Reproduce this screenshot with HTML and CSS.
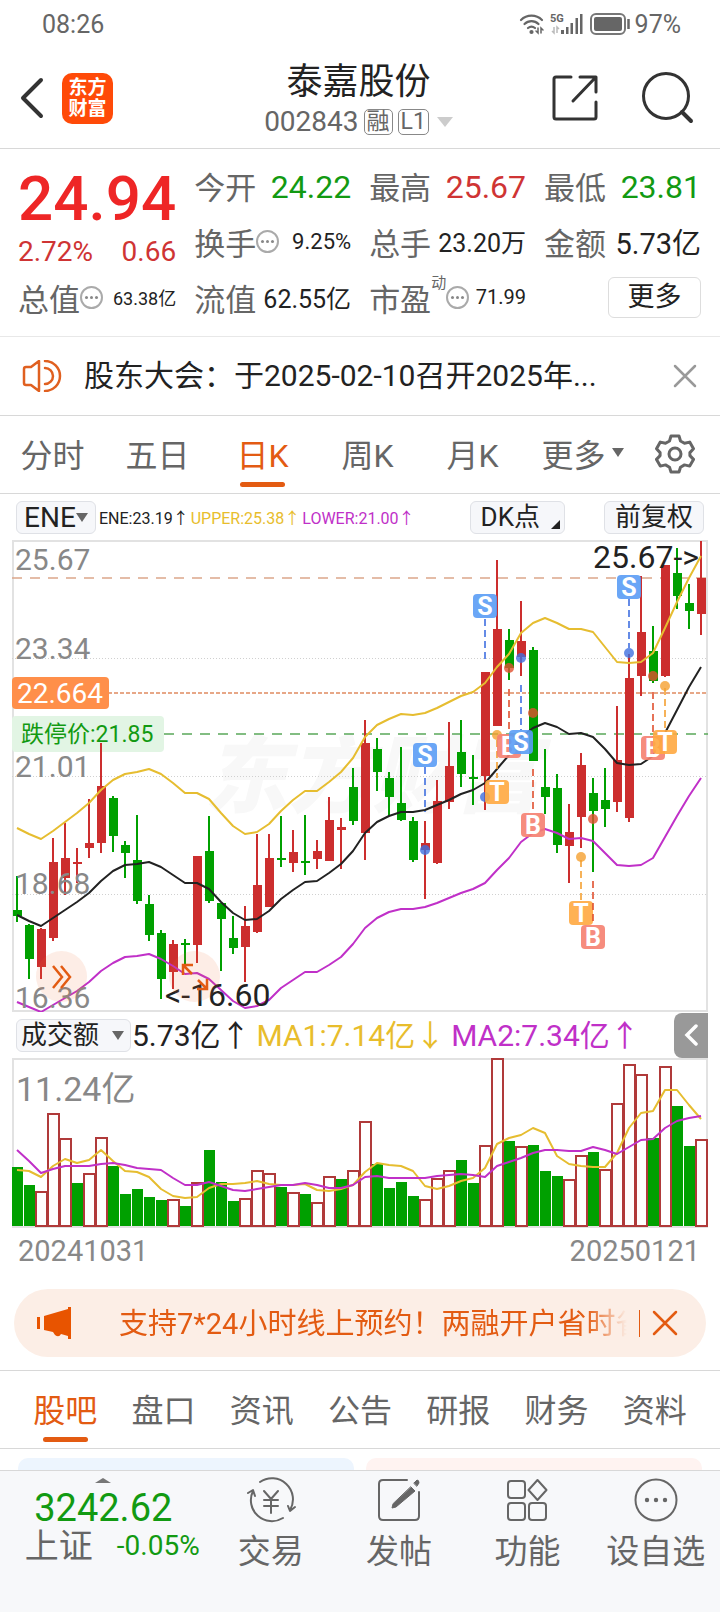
FILE: index.html
```html
<!DOCTYPE html>
<html lang="zh-CN">
<head>
  <meta charset="UTF-8" />
  <meta name="viewport" content="width=device-width, initial-scale=1.0" />
  <title>泰嘉股份 002843</title>
  <link rel="stylesheet" href="styles.css">
</head>

<body>
  <div class="status-bar">
    <span>08:26</span>
    <div class="status-icons">
      <svg width="26" height="24" viewBox="0 0 26 24" fill="none" stroke="#666" stroke-width="2.2" stroke-linecap="round">
        <path d="M2 8a15 15 0 0 1 21 0M5.500 12a10 10 0 0 1 14 0M9 16a5.500 5.500 0 0 1 7 0" />
        <circle cx="12.500" cy="20" r="1" fill="#666" />
        <path d="M19 16v5l-2-2M22 21v-5l2 2" stroke-width="1.500" />
      </svg>
      <svg width="36" height="24" viewBox="0 0 36 24" fill="#666">
        <text x="1" y="10" class="net">5G</text>
        <path d="M12 18h3v4h-3zM17 15h2.500v7H17zM21.500 11H24v11h-2.500zM26.500 6H29v16h-2.500zM31 2h2.500v20H31z" />
        <path d="M5 15v6l-2-2M8 21v-6l2 2" fill="none" stroke="#bbb" stroke-width="1.500" />
      </svg>
      <svg width="42" height="24" viewBox="0 0 42 24">
        <rect x="2" y="2" width="34" height="20" rx="5" fill="none" stroke="#777" stroke-width="2" />
        <rect x="5" y="5" width="28" height="14" rx="2" fill="#666" />
        <path d="M39.500 7v10" stroke="#666" stroke-width="2.500" />
      </svg>
      <span>97%</span>
    </div>
  </div>

  <header class="top-bar">
    <div class="top-side">
      <button class="icon-btn" aria-label="返回">
        <svg width="28" height="46" viewBox="0 0 28 46" fill="none" stroke="#333" stroke-width="4" stroke-linecap="round" stroke-linejoin="round"><path d="M23 5L5 23l18 18" /></svg>
      </button>
      <a href="#" class="logo"><span>东方</span><span>财富</span></a>
    </div>
    <div class="stock-name">
      <h1>泰嘉股份</h1>
      <div class="stock-code">
        <span>002843</span><span class="tag">融</span><span class="tag">L1</span><i class="caret"></i>
      </div>
    </div>
    <div class="top-side top-right">
      <button class="icon-btn" aria-label="分享">
        <svg width="48" height="48" viewBox="0 0 48 48" fill="none" stroke="#333" stroke-width="3" stroke-linecap="round" stroke-linejoin="round"><path d="M20 3H5q-2 0-2 2v38q0 2 2 2h38q2 0 2-2V28M29 3h16v15M44 4L22 27" /></svg>
      </button>
      <button class="icon-btn" aria-label="搜索">
        <svg width="54" height="54" viewBox="0 0 54 54" fill="none" stroke="#333" stroke-width="3" stroke-linecap="round"><circle cx="25" cy="25" r="22.500" /><path d="M41 41l9 9" stroke-width="4" /></svg>
      </button>
    </div>
  </header>

  <section class="quote">
    <div class="price">
      <strong>24.94</strong>
      <div><span>2.72%</span><span>0.66</span></div>
    </div>
    <div class="cell"><span>今开</span><b class="green size-xl">24.22</b></div>
    <div class="cell"><span>最高</span><b class="red size-xl">25.67</b></div>
    <div class="cell"><span>最低</span><b class="green size-xl">23.81</b></div>
    <div class="cell"><span>换手</span><i class="dots"></i><b class="size-m">9.25%</b></div>
    <div class="cell"><span>总手</span><b class="size-l">23.20万</b></div>
    <div class="cell"><span>金额</span><b class="size-29">5.73亿</b></div>
    <div class="cell"><span>总值</span><i class="dots"></i><b class="size-s">63.38亿</b></div>
    <div class="cell"><span>流值</span><b class="size-l">62.55亿</b></div>
    <div class="cell"><span>市盈</span><sup>动</sup><i class="dots"></i><b class="size-20">71.99</b></div>
    <div class="cell"><button class="more-btn">更多</button></div>
  </section>

  <section class="notice">
    <svg width="40" height="32" viewBox="0 0 40 32" fill="none" stroke="#e06020" stroke-width="2.500" stroke-linejoin="round" stroke-linecap="round">
      <path d="M17 1v30L9 25H4q-2 0-2-2V9q0-2 2-2h5zM23 1a15 15 0 0 1 0 30M23 8a8 8 0 0 1 0 16" />
    </svg>
    <a href="#">股东大会：于2025-02-10召开2025年...</a>
    <button class="icon-btn" aria-label="关闭公告">
      <svg width="24" height="24" viewBox="0 0 24 24" stroke="#999" stroke-width="2.500" stroke-linecap="round"><path d="M2 2l20 20M22 2L2 22" /></svg>
    </button>
  </section>

  <nav class="tabs period-tabs">
    <button>分时</button>
    <button>五日</button>
    <button class="active">日K</button>
    <button>周K</button>
    <button>月K</button>
    <button class="more-tab">更多<i class="caret caret-small"></i></button>
    <button class="gear" aria-label="设置">
      <svg width="40" height="40" viewBox="0 0 40 40" fill="none" stroke="#666" stroke-width="3" stroke-linejoin="round">
        <path d="M16 2h8l1.500 5 4 2.300 5.200-1.200 3.800 6.700-3.600 3.800v3l3.600 3.800-3.800 6.700-5.200-1.200-4 2.300L24 38h-8l-1.500-4.800-4-2.300-5.200 1.200-3.800-6.700 3.600-3.800v-3l-3.600-3.800 3.800-6.700 5.200 1.200 4-2.300z" />
        <circle cx="20" cy="20" r="6" />
      </svg>
    </button>
  </nav>

  <div class="chart-head">
    <label class="picker">
      <select aria-label="主图指标"><option>ENE</option></select>
      <i class="caret caret-small"></i>
    </label>
    <div class="ene-values">
      <span>ENE:23.19↑</span>
      <span class="yellow">UPPER:25.38↑</span>
      <span class="purple">LOWER:21.00↑</span>
    </div>
    <button class="chip chip-dk">DK点</button>
    <button class="chip">前复权</button>
  </div>

  <div class="chart">
    <svg id="kline" viewBox="0 0 696 472"></svg>
    <button class="float-btn float-next" aria-label="展开">
      <svg width="24" height="26" viewBox="0 0 24 26" fill="none" stroke="#e35b12" stroke-width="2.500"><path d="M3 2l9 11-9 11M11 2l9 11-9 11" /></svg>
    </button>
    <button class="float-btn float-full" aria-label="全屏">
      <svg width="28" height="28" viewBox="0 0 28 28" fill="none" stroke="#e35b12" stroke-width="2.500"><path d="M12 2H2v10M2 2l9 9M16 26h10V16M26 26l-9-9" /></svg>
    </button>
  </div>

  <div class="chart-head vol-head">
    <label class="picker picker-cn">
      <select aria-label="副图指标"><option>成交额</option></select>
      <i class="caret caret-small"></i>
    </label>
    <div class="vol-values">
      <span>5.73亿↑</span>
      <span class="yellow">MA1:7.14亿↓</span>
      <span class="purple">MA2:7.34亿↑</span>
    </div>
    <button class="fold-btn" aria-label="收起">
      <svg width="14" height="22" viewBox="0 0 14 22" fill="none" stroke="#fff" stroke-width="3.500" stroke-linecap="round"><path d="M12 2L3 11l9 9" /></svg>
    </button>
  </div>
  <div class="chart">
    <svg id="volume" viewBox="0 0 696 170"></svg>
  </div>
  <div class="dates"><span>20241031</span><span>20250121</span></div>

  <section class="promo">
    <svg width="36" height="32" viewBox="0 0 36 32" fill="#e85400">
      <path d="M0 10h3v12H0zM7 9L31 2V0h3v32h-3v-3l-7-2q-2 4-6 1l-2-3-9-2z" />
    </svg>
    <a href="#">支持7*24小时线上预约！两融开户省时省力</a>
    <button class="icon-btn" aria-label="关闭">
      <svg width="26" height="26" viewBox="0 0 26 26" stroke="#e35b12" stroke-width="2.500" stroke-linecap="round"><path d="M2 2l22 22M24 2L2 24" /></svg>
    </button>
  </section>

  <nav class="tabs info-tabs">
    <button class="active">股吧</button>
    <button>盘口</button>
    <button>资讯</button>
    <button>公告</button>
    <button>研报</button>
    <button>财务</button>
    <button>资料</button>
  </nav>

  <div class="cards">
    <div class="card card-blue"></div>
    <div class="card card-red"></div>
  </div>

  <footer class="bottom-bar">
    <a href="#" class="index">
      <i class="caret caret-up"></i>
      <span class="index-value">3242.62</span>
      <span class="index-row"><span>上证</span><span class="green">-0.05%</span></span>
    </a>
    <a href="#" class="action">
      <svg width="50" height="46" viewBox="0 0 50 46" fill="none" stroke="#666" stroke-width="2" stroke-linecap="round" stroke-linejoin="round">
        <path d="M14 5a21 21 0 0 1 30 28M37 41A21 21 0 0 1 7 14M2 16l5-3 2 6M49 30l-5 4-2-5M18 14l7 8 7-8M25 22v14M18 23h14M18 29h14" />
      </svg>
      <span>交易</span>
    </a>
    <a href="#" class="action">
      <svg width="44" height="46" viewBox="0 0 44 46" fill="none" stroke="#666" stroke-width="2" stroke-linecap="round">
        <path d="M30 3H6Q2 3 2 7v32q0 4 4 4h32q4 0 4-4V15" />
        <path d="M34 10l4 4-19 16-4 1 1-4zM37 6l3-3q2 0 2 3l-2 3z" fill="#666" stroke-width="1" />
      </svg>
      <span>发帖</span>
    </a>
    <a href="#" class="action">
      <svg width="42" height="46" viewBox="0 0 42 46" fill="none" stroke="#666" stroke-width="2" stroke-linejoin="round">
        <rect x="2" y="4" width="17" height="17" rx="3" /><rect x="2" y="26" width="17" height="17" rx="3" /><rect x="23" y="26" width="17" height="17" rx="3" />
        <path d="M31.500 3l9 10-9 10-9-10z" />
      </svg>
      <span>功能</span>
    </a>
    <a href="#" class="action">
      <svg width="46" height="46" viewBox="0 0 46 46" fill="none" stroke="#666" stroke-width="2">
        <circle cx="23" cy="23" r="20.500" />
        <g fill="#666" stroke="none"><circle cx="14" cy="23" r="2.200" /><circle cx="23" cy="23" r="2.200" /><circle cx="32" cy="23" r="2.200" /></g>
      </svg>
      <span>设自选</span>
    </a>
  </footer>

  <script src="chart.js"></script>
</body>
</html>
```
FILE: styles.css
```css
:root {
  --text: #222;
  --muted: #666;
  --accent: #e35b12;
  --red: #cf3434;
  --green: #129a12;
  --yellow: #e8bd2c;
  --purple: #c030c8;
  --line: #d8d8d8;
  --chip: #f6f7fa;
}

* {
  box-sizing: border-box;
}

body {
  margin: 0;
  background: #fff;
  color: var(--text);
  font-family: Roboto, "Noto Sans CJK SC", sans-serif;
}

button,
select {
  font-family: inherit;
  color: inherit;
  background: none;
  border: none;
  padding: 0;
  margin: 0;
  cursor: pointer;
}

a {
  color: inherit;
  text-decoration: none;
}

svg {
  display: block;
  flex-shrink: 0;
}

.red { color: var(--red); }
.green { color: var(--green); }
.yellow { color: var(--yellow); }
.purple { color: var(--purple); }

.icon-btn {
  display: flex;
  align-items: center;
}

.caret {
  display: inline-block;
  border: 8px solid transparent;
  border-top: 10px solid #ccc;
  border-bottom: none;
}

.caret-small {
  border-width: 9px 6px 0;
  border-top-color: #666;
}

.caret-up {
  border-width: 0 8px 5px;
  border-bottom: 5px solid #777;
}

/* status bar */
.status-bar {
  display: flex;
  justify-content: space-between;
  align-items: center;
  height: 48px;
  padding: 0 39px 0 42px;
  font-size: 25px;
  color: var(--muted);
}

.status-icons {
  display: flex;
  align-items: center;
  gap: 4px;
}

.net {
  font-size: 11px;
  font-weight: 700;
}

/* header */
.top-bar {
  display: grid;
  grid-template-columns: 1fr auto 1fr;
  align-items: center;
  height: 101px;
  padding: 0 25px 0 18px;
  border-bottom: 1px solid var(--line);
}

.top-side {
  display: flex;
  align-items: center;
  gap: 16px;
}

.top-right {
  justify-content: flex-end;
  gap: 42px;
}

.logo {
  display: flex;
  flex-direction: column;
  align-items: center;
  justify-content: center;
  width: 51px;
  height: 51px;
  border-radius: 10px;
  background: #ff4a08;
  color: #fff;
  font-size: 19px;
  font-weight: 700;
  line-height: 21px;
}

.stock-name {
  padding: 5px 0 0 4px;
  text-align: center;
}

.stock-name h1 {
  margin: 0;
  font-size: 36px;
  font-weight: 400;
  line-height: 42px;
}

.stock-code {
  display: flex;
  align-items: center;
  justify-content: center;
  gap: 5px;
  height: 38px;
  font-size: 28px;
  color: var(--muted);
}

.tag {
  padding: 0 2px;
  border: 1px solid #888;
  border-radius: 5px;
  font-size: 23px;
  line-height: 24px;
}

.stock-code .caret {
  margin-left: 3px;
}

/* quote */
.quote {
  display: grid;
  grid-template-columns: repeat(4, 1fr);
  grid-auto-rows: 56px;
  column-gap: 18px;
  padding: 8px 19px 11px 18px;
  border-bottom: 1px solid #e8e8e8;
}

.price {
  grid-row: span 2;
  display: flex;
  flex-direction: column;
  color: var(--red);
}

.price strong {
  padding-top: 6px;
  font-size: 62px;
  font-weight: 500;
  line-height: 72px;
  color: #ee2626;
}

.price div {
  display: flex;
  justify-content: space-between;
  font-size: 28px;
  line-height: 34px;
}

.cell {
  display: flex;
  align-items: center;
  min-width: 0;
  font-size: 31px;
  color: var(--muted);
  white-space: nowrap;
}

.cell b {
  margin-left: auto;
  font-weight: 400;
  color: var(--text);
}

.cell b.red { color: var(--red); }
.cell b.green { color: var(--green); }
.cell .size-xl { padding-top: 4px; font-size: 32px; }
.cell .size-29 { font-size: 29px; }
.cell .size-l { font-size: 25px; }
.cell .size-m { font-size: 22px; }
.cell .size-20 { font-size: 20px; }
.cell .size-s { font-size: 18px; }

.cell sup {
  align-self: flex-start;
  font-size: 15px;
  line-height: 28px;
}

.dots {
  display: flex;
  align-items: center;
  justify-content: center;
  width: 23px;
  height: 23px;
  border: 2px solid #aaa;
  border-radius: 50%;
}

.dots::before {
  content: "";
  width: 3px;
  height: 3px;
  border-radius: 50%;
  background: #888;
  box-shadow: -5px 0 #888, 5px 0 #888;
}

.more-btn {
  width: 93px;
  height: 41px;
  margin-left: auto;
  border: 1px solid #ddd;
  border-radius: 6px;
  font-size: 27px;
  line-height: 36px;
  color: var(--text);
}

/* notice */
.notice {
  display: flex;
  align-items: center;
  gap: 22px;
  height: 79px;
  padding: 0 23px 0 22px;
  border-bottom: 1px solid var(--line);
  font-size: 30px;
}

.notice a {
  flex: 1;
  padding-bottom: 7px;
}

/* tabs */
.tabs {
  display: grid;
  height: 78px;
  border-bottom: 1px solid var(--line);
}

.tabs button {
  position: relative;
  display: flex;
  align-items: center;
  justify-content: center;
  gap: 6px;
  padding-bottom: 4px;
  font-size: 32px;
  color: var(--muted);
}

.tabs .active {
  color: var(--accent);
}

.tabs .active::after {
  content: "";
  position: absolute;
  bottom: 6px;
  width: 45px;
  height: 5px;
  border-radius: 3px;
  background: var(--accent);
}

.period-tabs {
  grid-template-columns: repeat(6, 7fr) 6fr;
}

.tabs .more-tab {
  padding-left: 10px;
}

.tabs .gear {
  padding-bottom: 2px;
}

.info-tabs {
  grid-template-columns: repeat(7, 1fr);
  padding: 0 16px;
  border-top: 1px solid var(--line);
  height: 79px;
}

/* chart */
.chart-head {
  display: flex;
  align-items: center;
  height: 46px;
  padding: 0 16px;
}

.picker,
.chip {
  display: flex;
  align-items: center;
  height: 33px;
  border: 1px solid #dfe1e6;
  border-radius: 6px;
  background: var(--chip);
  font-size: 26px;
  line-height: 30px;
}

.picker {
  padding: 0 7px;
}

.picker select {
  appearance: none;
  font-size: 28px;
  line-height: 31px;
  outline: none;
}

.picker-cn {
  padding: 0 6px 0 4px;
  gap: 12px;
}

.picker-cn select {
  font-size: 26px;
}

.ene-values {
  display: flex;
  flex: 1;
  gap: 2px;
  padding-left: 3px;
  font-size: 16px;
  white-space: nowrap;
}

.chip {
  padding: 0 10px;
}

.chip-dk {
  position: relative;
  padding-right: 24px;
  margin-right: 39px;
}

.chip-dk::after {
  content: "";
  position: absolute;
  right: 4px;
  bottom: 4px;
  border-left: 9px solid transparent;
  border-bottom: 9px solid #222;
}

.chart {
  position: relative;
  padding: 0 12px;
}

.chart > svg {
  width: 100%;
  height: auto;
}

.float-btn {
  position: absolute;
  bottom: 10px;
  display: flex;
  align-items: center;
  justify-content: center;
  width: 51px;
  height: 51px;
  border-radius: 50%;
  background: rgba(240, 110, 50, 0.12);
}

.float-next { left: 36px; }
.float-full { left: 169px; }

.vol-head {
  padding-right: 12px;
}

.vol-values {
  display: flex;
  flex: 1;
  gap: 6px;
  padding: 0 0 4px 1px;
  font-size: 30px;
  white-space: nowrap;
}

.fold-btn {
  display: flex;
  align-items: center;
  justify-content: center;
  width: 34px;
  height: 45px;
  border-radius: 8px 0 0 8px;
  background: #999;
}

.frame { fill: none; stroke: #e2e2e2; stroke-width: 2; }
.grid-line { stroke: #d0d0d0; stroke-dasharray: 1 2; }
.axis { fill: #888; font-size: 30px; }
.axis-vol { fill: #888; font-size: 34px; }
.peak { fill: #222; font-size: 32px; }
.watermark { fill: #f8f8f8; font-size: 84px; font-weight: 900; font-style: italic; }
.tag-cost { fill: #fff; font-size: 28px; }
.tag-limit { fill: #129a12; font-size: 23px; }
.mark { fill: #fff; font-size: 25px; font-weight: 700; text-anchor: middle; }
.line { fill: none; stroke-width: 2; stroke-linejoin: round; }

.dates {
  display: flex;
  justify-content: space-between;
  align-items: center;
  height: 46px;
  padding: 0 20px 0 18px;
  font-size: 29px;
  color: #888;
}

/* promo */
.promo {
  display: flex;
  align-items: center;
  height: 68px;
  margin: 15px 14px 13px;
  padding: 0 28px 0 23px;
  border-radius: 34px;
  background: #fceee6;
  color: var(--accent);
  font-size: 29px;
}

.promo a {
  flex: 1;
  min-width: 0;
  margin: 0 12px 4px 46px;
  overflow: hidden;
  white-space: nowrap;
  mask-image: linear-gradient(to right, #000 92%, transparent);
}

.promo .icon-btn {
  height: 27px;
  padding-left: 12px;
  border-left: 1px solid var(--accent);
}

/* feed cards */
.cards {
  display: grid;
  grid-template-columns: 1fr 1fr;
  gap: 12px;
  padding: 9px 18px 0;
}

.card {
  height: 12px;
  border-radius: 10px 10px 0 0;
}

.card-blue { background: #edf5fe; }
.card-red { background: #fff3f1; }

/* bottom bar */
.bottom-bar {
  display: grid;
  grid-template-columns: 206fr repeat(4, 128fr);
  height: 142px;
  border-top: 1px solid var(--line);
  background: #f7f8fa;
  color: var(--muted);
}

.index {
  display: flex;
  flex-direction: column;
  align-items: center;
  padding-top: 7px;
}

.index-value {
  font-size: 38px;
  line-height: 50px;
  color: var(--green);
}

.index-row {
  display: flex;
  align-items: center;
  gap: 24px;
  padding-left: 18px;
  font-size: 28px;
  line-height: 26px;
}

.index-row span:first-child {
  font-size: 34px;
}

.action {
  display: flex;
  flex-direction: column;
  align-items: center;
  gap: 5px;
  padding-top: 6px;
  font-size: 33px;
  line-height: 48px;
}
```
FILE: chart.js
```javascript
// [high, body top, body bottom, low], three units per pixel
const candles = [
  [1038, 1140, 1157, 1175], [1183, 1185, 1287, 1347], [1195, 1197, 1311, 1347], [924, 996, 1225, 1232],
  [878, 983, 1045, 1096], [954, 996, 1002, 1060], [807, 939, 955, 983], [640, 768, 938, 968],
  [798, 805, 918, 965], [934, 946, 969, 1044], [856, 990, 1112, 1121], [1095, 1122, 1214, 1232],
  [1201, 1210, 1347, 1408], [1231, 1242, 1326, 1376], [1228, 1240, 1246, 1310], [978, 978, 1246, 1299],
  [858, 962, 1113, 1118], [1119, 1119, 1166, 1322], [1158, 1224, 1254, 1271], [1129, 1188, 1251, 1355],
  [912, 1066, 1207, 1210], [912, 983, 1131, 1131], [858, 984, 990, 1010], [900, 966, 998, 1025],
  [856, 994, 1000, 1035], [931, 963, 986, 1017], [802, 870, 994, 994], [863, 891, 900, 1016],
  [714, 771, 873, 886], [569, 640, 909, 991], [624, 658, 726, 783], [726, 744, 801, 859],
  [651, 818, 871, 873], [862, 874, 990, 997], [873, 939, 960, 1107], [749, 813, 999, 1001],
  [577, 709, 815, 836], [570, 666, 731, 771], [674, 740, 745, 824], [427, 427, 739, 839],
  [91, 297, 587, 587], [297, 330, 414, 449], [213, 333, 380, 438], [351, 360, 692, 692],
  [658, 771, 801, 852], [731, 774, 944, 969], [821, 906, 947, 1058], [669, 706, 860, 954],
  [744, 789, 842, 1027], [714, 810, 837, 892], [528, 690, 817, 847], [373, 445, 863, 875],
  [137, 306, 437, 497], [287, 362, 453, 460], [106, 106, 438, 440], [53, 129, 198, 236],
  [162, 219, 243, 297], [34, 143, 252, 314]
];
const candleColors = "ggrrrrrrgggggrgrgggrrrgrgrrrgrggggrrrggrrgrgggrrggrrrgrggr";

const upper = [894, 913, 927, 903, 876, 849, 818, 780, 749, 731, 726, 717, 733, 760, 789, 788, 806, 850, 888, 911, 907, 881, 842, 811, 784, 782, 755, 726, 683, 622, 586, 567, 553, 556, 549, 533, 515, 498, 485, 460, 412, 371, 310, 278, 263, 279, 298, 296, 307, 351, 395, 398, 396, 370, 293, 215, 145, 77];
const middle = [1156, 1174, 1187, 1164, 1141, 1115, 1088, 1052, 1023, 1006, 1002, 995, 1010, 1035, 1060, 1058, 1076, 1117, 1150, 1171, 1167, 1144, 1108, 1080, 1055, 1053, 1028, 1001, 963, 909, 875, 857, 845, 847, 840, 826, 809, 793, 780, 760, 716, 676, 622, 594, 579, 592, 611, 610, 620, 658, 698, 704, 701, 678, 610, 540, 472, 410];
const lower = [1417, 1432, 1445, 1425, 1405, 1382, 1355, 1324, 1298, 1282, 1278, 1271, 1286, 1307, 1331, 1330, 1346, 1380, 1414, 1433, 1429, 1410, 1375, 1350, 1327, 1325, 1304, 1280, 1243, 1194, 1163, 1147, 1136, 1138, 1132, 1118, 1105, 1090, 1078, 1058, 1019, 984, 935, 908, 896, 908, 926, 923, 933, 969, 1004, 1008, 1005, 984, 920, 857, 798, 743];

const volumes = [471, 525, 546, 312, 387, 519, 492, 384, 468, 552, 537, 561, 570, 570, 588, 519, 420, 516, 573, 567, 483, 492, 531, 549, 552, 579, 501, 507, 483, 336, 462, 534, 516, 558, 570, 507, 483, 450, 519, 408, 147, 393, 411, 405, 483, 498, 510, 438, 426, 480, 282, 165, 195, 384, 171, 288, 408, 390];
const volumeColors = "ggrrrgrrgggggrgrgggrrrgrgrrgrrggggrrrggrrgrgggrrgrrrrgrggr";
const ma1 = [480, 483, 500, 468, 447, 459, 450, 420, 453, 482, 486, 501, 537, 558, 564, 560, 534, 521, 521, 518, 512, 523, 526, 524, 522, 540, 543, 537, 524, 486, 459, 464, 467, 483, 528, 537, 528, 514, 505, 474, 402, 384, 374, 353, 369, 437, 461, 468, 471, 471, 429, 354, 310, 302, 240, 240, 286, 326];
const ma2 = [421, 454, 489, 476, 467, 467, 467, 462, 458, 465, 473, 476, 480, 503, 524, 524, 516, 527, 539, 543, 537, 531, 525, 525, 519, 525, 534, 535, 525, 501, 498, 504, 504, 504, 504, 498, 494, 491, 496, 501, 467, 455, 443, 430, 420, 420, 423, 423, 411, 420, 432, 411, 391, 386, 354, 333, 324, 317];

// [candle, letter, badge, dot, dash start, dash end]
const marks = [
  [34, "S", 674, 960, 712, 845],
  [39, "S", 227, 800, 266, 400],
  [40, "T", 785, 615, 630, 745],
  [41, "B", 648, 414, 477, 610],
  [42, "S", 635, 385, 465, 600],
  [43, "B", 886, 548, 717, 848],
  [47, "T", 1150, 981, 990, 1115],
  [48, "B", 1222, 868, 1053, 1185],
  [51, "S", 170, 368, 208, 355],
  [53, "B", 655, 437, 487, 620],
  [54, "T", 637, 467, 475, 602]
];
const markColors = {
  S: ["#5a9cf5", "#3f6fe0"],
  B: ["#f57f70", "#e0502f"],
  T: ["#ffa940", "#f5a030"]
};

const RED = "#cc2e2e";
const GREEN = "#00a000";
const x = i => 5 + i * 12;
const y = v => Math.round(v / 3 - 10);
const vy = v => Math.round(v / 3 - 48);

function polyline(values, scale, color) {
  const points = values.map((v, i) => `${x(i)},${scale(v)}`).join(" ");
  return `<polyline class="line" points="${points}" stroke="${color}" />`;
}

function hline(pos, color, dash, from = 0) {
  return `<path d="M${from} ${pos}H696" stroke="${color}" stroke-width="1.5" stroke-dasharray="${dash}" />`;
}

function drawKline() {
  let out = `<text class="watermark" x="192" y="266">东方财富</text>`;
  out += `<rect class="frame" x="1" y="1" width="694" height="470" />`;
  [118.5, 236.5, 354.5].forEach(pos => {
    out += `<path class="grid-line" d="M0 ${pos}H696" />`;
  });
  out += hline(38, "#dba78a", "10 8");
  out += hline(153, "#e08a60", "4 2");
  out += hline(194, "#5aa85a", "10 8", 152);
  out += `<rect y="176" width="152" height="36" rx="4" fill="#e2f5e4" />`;

  candles.forEach(([high, top, bottom, low], i) => {
    const color = candleColors[i] === "r" ? RED : GREEN;
    out += `<rect x="${x(i) - 1}" y="${y(high)}" width="2" height="${y(low) - y(high)}" fill="${color}" />`;
    out += `<rect x="${x(i) - 4}" y="${y(top)}" width="9" height="${Math.max(2, y(bottom) - y(top))}" fill="${color}" />`;
  });
  out += polyline(upper, y, "#e6bd30");
  out += polyline(middle, y, "#222");
  out += polyline(lower, y, "#c030c8");

  marks.forEach(([i, letter, badge, dot, from, to]) => {
    const [fill, dark] = markColors[letter];
    out += `<path d="M${x(i)} ${y(from)}V${y(to)}" stroke="${dark}" stroke-width="2" stroke-dasharray="7 4" opacity="0.8" />`;
    out += `<circle cx="${x(i)}" cy="${y(dot)}" r="5" fill="${dark}" opacity="0.8" />`;
    out += `<rect x="${x(i) - 12}" y="${y(badge) - 12}" width="24" height="24" rx="4" fill="${fill}" opacity="0.9" />`;
    out += `<text class="mark" x="${x(i)}" y="${y(badge) + 9}">${letter}</text>`;
  });

  [["25.67", 30], ["23.34", 119], ["21.01", 237], ["18.68", 354], ["16.36", 468]].forEach(([label, pos]) => {
    out += `<text class="axis" x="3" y="${pos}">${label}</text>`;
  });
  out += `<rect y="137" width="97" height="32" rx="4" fill="#ff8f4a" />`;
  out += `<text class="tag-cost" x="5" y="163">22.664</text>`;
  out += `<text class="tag-limit" x="9" y="202">跌停价:21.85</text>`;
  out += `<text class="peak" x="153" y="466">&lt;-16.60</text>`;
  out += `<text class="peak" x="687" y="28" text-anchor="end">25.67-&gt;</text>`;
  document.getElementById("kline").innerHTML = out;
}

function drawVolume() {
  let out = `<rect class="frame" x="1" y="1" width="694" height="168" />`;
  out += `<text class="axis-vol" x="4" y="43">11.24亿</text>`;
  volumes.forEach((v, i) => {
    const top = vy(v);
    if (volumeColors[i] === "r") {
      out += `<rect x="${i * 12}" y="${top}" width="11" height="${168 - top}" fill="#fff" stroke="#b03a3a" stroke-width="2" />`;
    } else {
      out += `<rect x="${i * 12}" y="${top}" width="11" height="${168 - top}" fill="${GREEN}" />`;
    }
  });
  out += polyline(ma1, vy, "#e6bd30");
  out += polyline(ma2, vy, "#c030c8");
  document.getElementById("volume").innerHTML = out;
}

drawKline();
drawVolume();
```
